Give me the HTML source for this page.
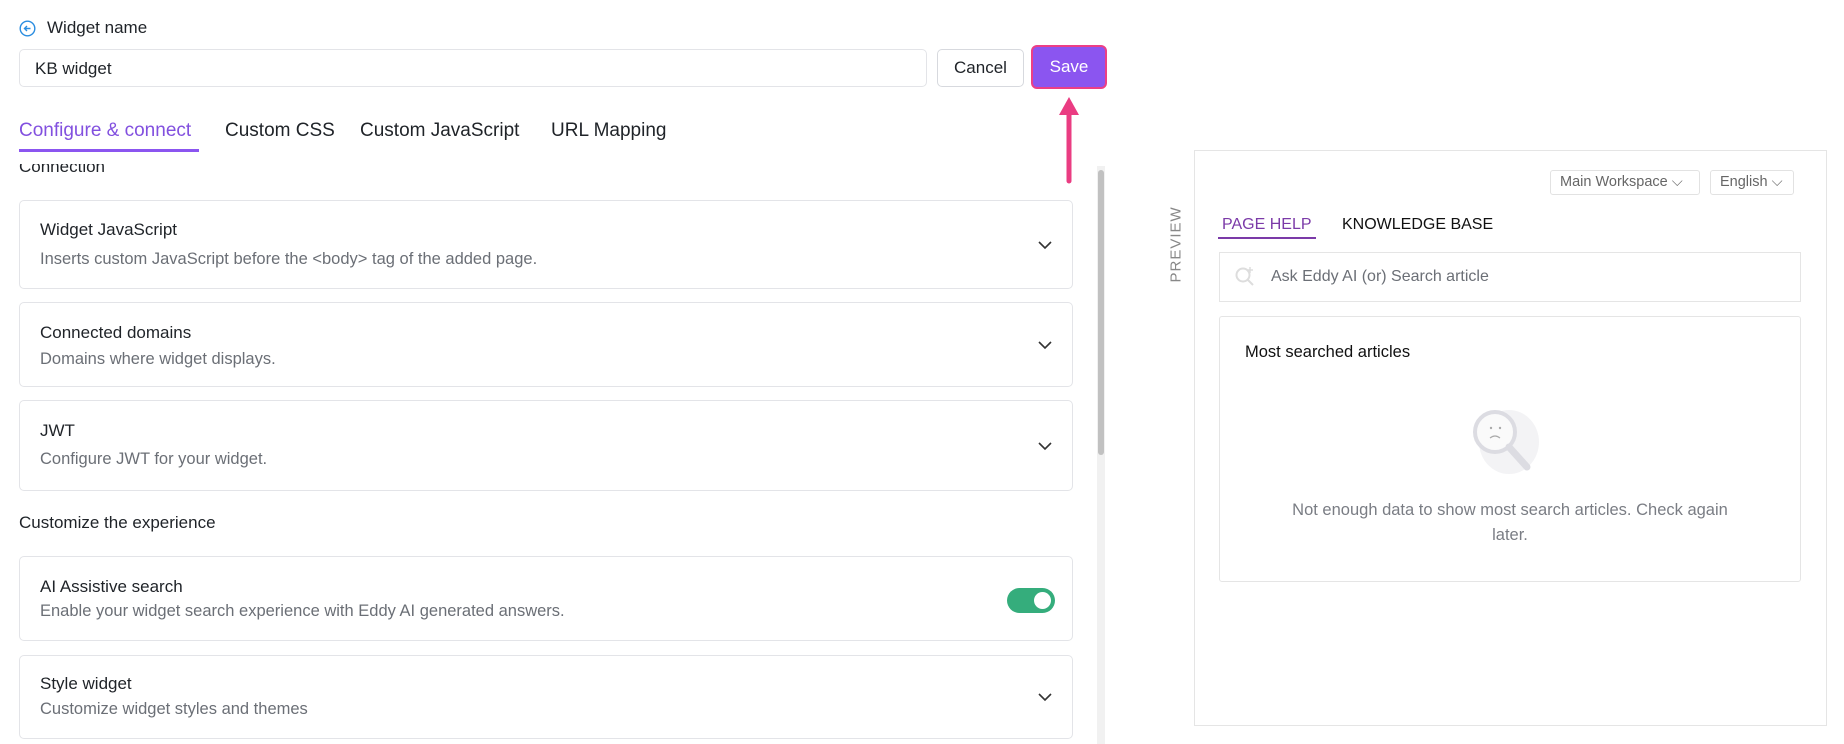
<!DOCTYPE html>
<html><head><meta charset="utf-8"><style>
*{box-sizing:border-box;margin:0;padding:0}
body{width:1844px;height:744px;overflow:hidden;background:#fff;font-family:"Liberation Sans",sans-serif;color:#1f2328;position:relative}
.a{position:absolute}
.card{position:absolute;left:19px;width:1054px;border:1px solid #e3e4e8;border-radius:5px}
.card .t{position:absolute;left:20px;font-size:17px;color:#1f2328}
.card .s{position:absolute;left:20px;font-size:16.5px;color:#6b6f76}
.chev{position:absolute;left:1016px;width:18px;height:18px}
.tab{position:absolute;top:120px;font-size:19px;color:#1f2328}
</style></head><body>
<svg class="a" style="left:19px;top:20px" width="17" height="17" viewBox="0 0 17 17"><circle cx="8.5" cy="8.5" r="7.3" fill="none" stroke="#2a8de0" stroke-width="1.4"/><path d="M11.5 8.5H5.5M8 6L5.5 8.5 8 11" fill="none" stroke="#2a8de0" stroke-width="1.4"/></svg>
<div class="a" style="left:47px;top:18px;font-size:17px">Widget name</div>
<div class="a" style="left:19px;top:49px;width:908px;height:38px;border:1px solid #e3e4e8;border-radius:5px;font-size:17px;padding:9px 15px">KB widget</div>
<div class="a" style="left:937px;top:49px;width:87px;height:38px;border:1px solid #d7d9de;border-radius:5px;font-size:17px;text-align:center;line-height:36px">Cancel</div>
<div class="a" style="left:1031px;top:45px;width:76px;height:44px;border:2.5px solid #ec3f86;border-radius:6px;background:#8b55f0;color:#fff;font-size:17px;text-align:center;line-height:39px">Save</div>
<svg class="a" style="left:1057px;top:95px" width="24" height="92" viewBox="0 0 24 92"><path d="M12 10V86" stroke="#ea3c82" stroke-width="5" stroke-linecap="round"/><path d="M2 20L12 2 22 20Z" fill="#ea3c82"/></svg>
<div class="tab" style="left:19px;color:#8250df">Configure &amp; connect</div>
<div class="a" style="left:19px;top:149px;width:180px;height:3px;background:#8b55f0"></div>
<div class="tab" style="left:225px">Custom CSS</div>
<div class="tab" style="left:360px">Custom JavaScript</div>
<div class="tab" style="left:551px">URL Mapping</div>
<div class="a" style="left:0;top:164px;width:1090px;height:20px;overflow:hidden">
 <div class="a" style="left:19px;top:-7px;font-size:17px">Connection</div>
</div>
<div class="card" style="top:200px;height:89px"><div class="t" style="top:19px">Widget JavaScript</div><div class="s" style="top:49px">Inserts custom JavaScript before the &lt;body&gt; tag of the added page.</div><svg class="chev" style="top:35px" viewBox="0 0 18 18"><path d="M3 6l6 6 6-6" fill="none" stroke="#333" stroke-width="1.6"/></svg></div>
<div class="card" style="top:302px;height:85px"><div class="t" style="top:20px">Connected domains</div><div class="s" style="top:47px">Domains where widget displays.</div><svg class="chev" style="top:33px" viewBox="0 0 18 18"><path d="M3 6l6 6 6-6" fill="none" stroke="#333" stroke-width="1.6"/></svg></div>
<div class="card" style="top:400px;height:91px"><div class="t" style="top:20px">JWT</div><div class="s" style="top:49px">Configure JWT for your widget.</div><svg class="chev" style="top:36px" viewBox="0 0 18 18"><path d="M3 6l6 6 6-6" fill="none" stroke="#333" stroke-width="1.6"/></svg></div>
<div class="a" style="left:19px;top:513px;font-size:17px">Customize the experience</div>
<div class="card" style="top:556px;height:85px"><div class="t" style="top:20px">AI Assistive search</div><div class="s" style="top:45px">Enable your widget search experience with Eddy AI generated answers.</div>
<div class="a" style="left:987px;top:31px;width:48px;height:25px;border-radius:13px;background:#35ad7c"><div class="a" style="left:27px;top:4px;width:17px;height:17px;border-radius:50%;background:#fff"></div></div></div>
<div class="card" style="top:655px;height:84px"><div class="t" style="top:18px">Style widget</div><div class="s" style="top:44px">Customize widget styles and themes</div><svg class="chev" style="top:32px" viewBox="0 0 18 18"><path d="M3 6l6 6 6-6" fill="none" stroke="#333" stroke-width="1.6"/></svg></div>
<div class="a" style="left:1097px;top:166px;width:8px;height:578px;background:#f1f1f1"></div>
<div class="a" style="left:1098px;top:170px;width:6px;height:285px;background:#c1c1c1;border-radius:3px"></div>

<div class="a" style="left:1194px;top:150px;width:633px;height:576px;border:1px solid #e5e5e5"></div>
<div class="a" style="left:1146px;top:244px;width:60px;font-size:15px;color:#888;letter-spacing:1px;transform:rotate(-90deg);text-align:center">PREVIEW</div>
<div class="a" style="left:1550px;top:170px;width:150px;height:25px;border:1px solid #e2e2e2;border-radius:3px;font-size:14.5px;color:#666;padding:3px 9px">Main Workspace ⌵</div>
<div class="a" style="left:1710px;top:170px;width:84px;height:25px;border:1px solid #e2e2e2;border-radius:3px;font-size:14.5px;color:#666;padding:3px 9px">English ⌵</div>
<div class="a" style="left:1222px;top:216px;font-size:16px;color:#7b3aa8">PAGE HELP</div>
<div class="a" style="left:1218px;top:237px;width:98px;height:2px;background:#7b3aa8"></div>
<div class="a" style="left:1342px;top:216px;font-size:16px;color:#111">KNOWLEDGE BASE</div>
<div class="a" style="left:1219px;top:252px;width:582px;height:50px;border:1px solid #e5e5e5"></div>
<svg class="a" style="left:1234px;top:265px" width="22" height="22" viewBox="0 0 22 22"><circle cx="9" cy="10" r="6.5" fill="none" stroke="#ddd" stroke-width="2"/><path d="M14 15l5 5" stroke="#ddd" stroke-width="2"/><path d="M16 2v6M13 5h6" stroke="#ddd" stroke-width="1.5"/></svg>
<div class="a" style="left:1271px;top:268px;font-size:16px;color:#6b6f76">Ask Eddy AI (or) Search article</div>
<div class="a" style="left:1219px;top:316px;width:582px;height:266px;border:1px solid #e5e5e5;border-radius:3px"></div>
<div class="a" style="left:1245px;top:343px;font-size:16.5px;color:#111">Most searched articles</div>
<svg class="a" style="left:1465px;top:402px" width="80" height="80" viewBox="0 0 80 80"><ellipse cx="44" cy="40" rx="30" ry="32" fill="#f3f3f5"/><circle cx="30" cy="30" r="20" fill="#fafafa" stroke="#dcdce2" stroke-width="4"/><path d="M44 45l18 20" stroke="#dcdce2" stroke-width="7" stroke-linecap="round"/><circle cx="26" cy="26" r="1.2" fill="#aaa"/><circle cx="35" cy="26" r="1.2" fill="#aaa"/><path d="M25 36q5-4 10 0" fill="none" stroke="#aaa" stroke-width="1.2"/></svg>
<div class="a" style="left:1230px;top:498px;width:560px;text-align:center;font-size:16.5px;line-height:25px;color:#7a7d84">Not enough data to show most search articles. Check again<br>later.</div>
</body></html>
